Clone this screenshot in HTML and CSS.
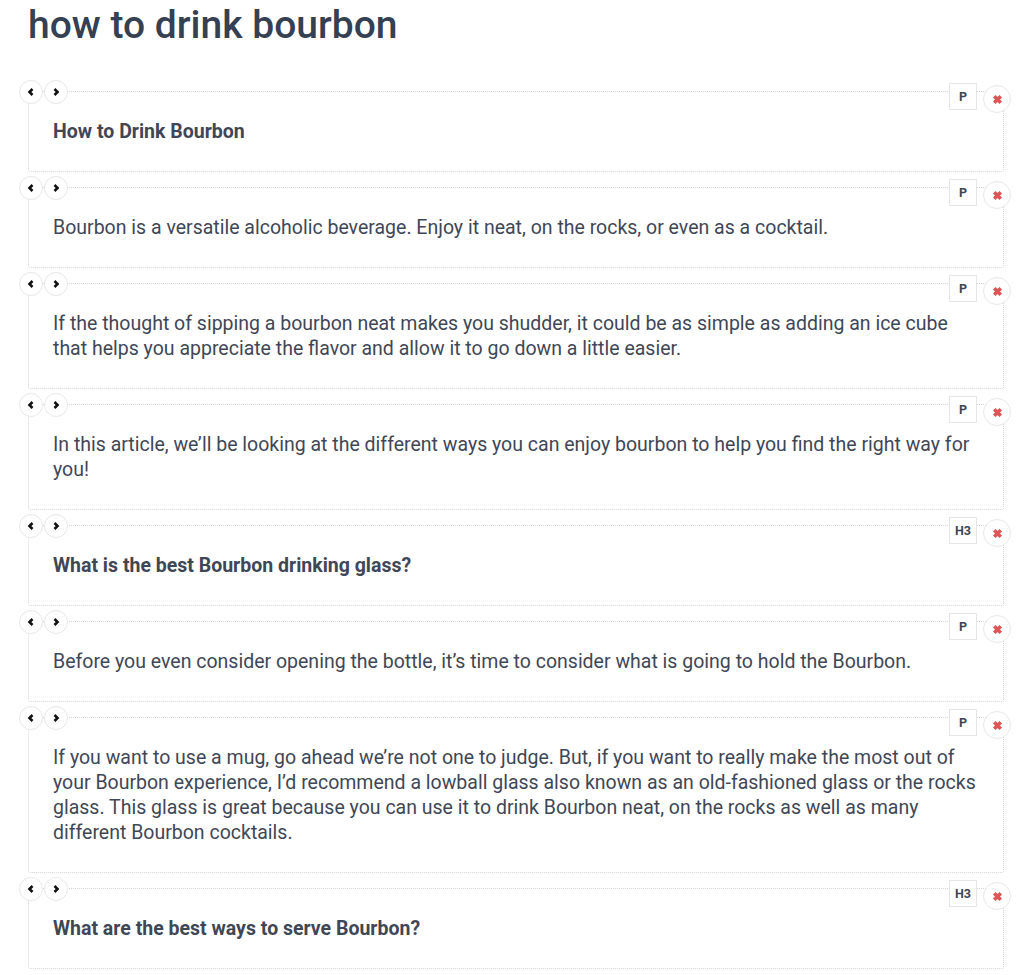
FILE: index.html
```html
<!DOCTYPE html>
<html lang="en">
<head>
    <meta charset="UTF-8">
    <meta name="viewport" content="width=device-width, initial-scale=1.0">
    <title>how to drink bourbon</title>
    <link rel="stylesheet" href="styles.css">
</head>
<body>
    <div class="page">
        <h1 class="page-title">how to drink bourbon</h1>

        <div class="blocks">
            <div class="block">
                <div class="block-move">
                    <button class="move-btn"><svg viewBox="0 0 10 10"><path d="M6.5 2 3.5 5l3 3"/></svg></button>
                    <button class="move-btn"><svg viewBox="0 0 10 10"><path d="M3.5 2l3 3-3 3"/></svg></button>
                </div>
                <span class="block-tag">P</span>
                <button class="block-remove"><svg viewBox="0 0 10 10"><path d="M2.5 2.5l5 5M7.5 2.5l-5 5"/></svg></button>
                <p class="block-text bold">How to Drink Bourbon</p>
            </div>

            <div class="block">
                <div class="block-move">
                    <button class="move-btn"><svg viewBox="0 0 10 10"><path d="M6.5 2 3.5 5l3 3"/></svg></button>
                    <button class="move-btn"><svg viewBox="0 0 10 10"><path d="M3.5 2l3 3-3 3"/></svg></button>
                </div>
                <span class="block-tag">P</span>
                <button class="block-remove"><svg viewBox="0 0 10 10"><path d="M2.5 2.5l5 5M7.5 2.5l-5 5"/></svg></button>
                <p class="block-text">Bourbon is a versatile alcoholic beverage. Enjoy it neat, on the rocks, or even as a cocktail.</p>
            </div>

            <div class="block">
                <div class="block-move">
                    <button class="move-btn"><svg viewBox="0 0 10 10"><path d="M6.5 2 3.5 5l3 3"/></svg></button>
                    <button class="move-btn"><svg viewBox="0 0 10 10"><path d="M3.5 2l3 3-3 3"/></svg></button>
                </div>
                <span class="block-tag">P</span>
                <button class="block-remove"><svg viewBox="0 0 10 10"><path d="M2.5 2.5l5 5M7.5 2.5l-5 5"/></svg></button>
                <p class="block-text">If the thought of sipping a bourbon neat makes you shudder, it could be as simple as adding an ice cube that helps you appreciate the flavor and allow it to go down a little easier.</p>
            </div>

            <div class="block">
                <div class="block-move">
                    <button class="move-btn"><svg viewBox="0 0 10 10"><path d="M6.5 2 3.5 5l3 3"/></svg></button>
                    <button class="move-btn"><svg viewBox="0 0 10 10"><path d="M3.5 2l3 3-3 3"/></svg></button>
                </div>
                <span class="block-tag">P</span>
                <button class="block-remove"><svg viewBox="0 0 10 10"><path d="M2.5 2.5l5 5M7.5 2.5l-5 5"/></svg></button>
                <p class="block-text">In this article, we’ll be looking at the different ways you can enjoy bourbon to help you find the right way for you!</p>
            </div>

            <div class="block">
                <div class="block-move">
                    <button class="move-btn"><svg viewBox="0 0 10 10"><path d="M6.5 2 3.5 5l3 3"/></svg></button>
                    <button class="move-btn"><svg viewBox="0 0 10 10"><path d="M3.5 2l3 3-3 3"/></svg></button>
                </div>
                <span class="block-tag">H3</span>
                <button class="block-remove"><svg viewBox="0 0 10 10"><path d="M2.5 2.5l5 5M7.5 2.5l-5 5"/></svg></button>
                <p class="block-text bold">What is the best Bourbon drinking glass?</p>
            </div>

            <div class="block">
                <div class="block-move">
                    <button class="move-btn"><svg viewBox="0 0 10 10"><path d="M6.5 2 3.5 5l3 3"/></svg></button>
                    <button class="move-btn"><svg viewBox="0 0 10 10"><path d="M3.5 2l3 3-3 3"/></svg></button>
                </div>
                <span class="block-tag">P</span>
                <button class="block-remove"><svg viewBox="0 0 10 10"><path d="M2.5 2.5l5 5M7.5 2.5l-5 5"/></svg></button>
                <p class="block-text">Before you even consider opening the bottle, it’s time to consider what is going to hold the Bourbon.</p>
            </div>

            <div class="block">
                <div class="block-move">
                    <button class="move-btn"><svg viewBox="0 0 10 10"><path d="M6.5 2 3.5 5l3 3"/></svg></button>
                    <button class="move-btn"><svg viewBox="0 0 10 10"><path d="M3.5 2l3 3-3 3"/></svg></button>
                </div>
                <span class="block-tag">P</span>
                <button class="block-remove"><svg viewBox="0 0 10 10"><path d="M2.5 2.5l5 5M7.5 2.5l-5 5"/></svg></button>
                <p class="block-text">If you want to use a mug, go ahead we’re not one to judge. But, if you want to really make the most out of your Bourbon experience, I’d recommend a lowball glass also known as an old-fashioned glass or the rocks glass. This glass is great because you can use it to drink Bourbon neat, on the rocks as well as many different Bourbon cocktails.</p>
            </div>

            <div class="block">
                <div class="block-move">
                    <button class="move-btn"><svg viewBox="0 0 10 10"><path d="M6.5 2 3.5 5l3 3"/></svg></button>
                    <button class="move-btn"><svg viewBox="0 0 10 10"><path d="M3.5 2l3 3-3 3"/></svg></button>
                </div>
                <span class="block-tag">H3</span>
                <button class="block-remove"><svg viewBox="0 0 10 10"><path d="M2.5 2.5l5 5M7.5 2.5l-5 5"/></svg></button>
                <p class="block-text bold">What are the best ways to serve Bourbon?</p>
            </div>
        </div>
    </div>
</body>
</html>
```

FILE: styles.css
```css
body {
    font-family: Roboto, "Liberation Sans", Arial, sans-serif;
    background-color: #fff;
    color: #3c4454;
    margin: 0;
}

.page {
    padding: 0 20px 20px 28px;
}

.page-title {
    font-size: 39px;
    font-weight: 500;
    color: #354052;
    line-height: 46px;
    margin: 2px 0 43px;
}

.blocks {
    display: flex;
    flex-direction: column;
    gap: 15px;
}

.block {
    position: relative;
    border: 1px dotted #d2d5da;
    border-radius: 0 0 2px 2px;
    padding: 27px 25px 27px 24px;
}

.block-text {
    margin: 0;
    font-size: 19.5px;
    line-height: 25px;
    color: #3f4757;
}

.block-text.bold {
    font-weight: 700;
}

/* controls sitting on the dotted border */
.block-move {
    position: absolute;
    top: -12px;
    left: -10px;
    display: flex;
    gap: 1px;
}

.move-btn,
.block-remove {
    width: 24px;
    height: 24px;
    padding: 0;
    border: 1px solid #e8e8e8;
    border-radius: 50%;
    background: #fff;
    display: flex;
    align-items: center;
    justify-content: center;
    cursor: pointer;
}

.move-btn svg {
    width: 10px;
    height: 10px;
    fill: none;
    stroke: #111;
    stroke-width: 2.6;
}

.block-tag {
    position: absolute;
    top: -9px;
    right: 26px;
    width: 28px;
    height: 27px;
    border: 1px solid #e6e6e6;
    background: #fff;
    font-size: 12.5px;
    font-weight: 700;
    color: #3d4555;
    display: flex;
    align-items: center;
    justify-content: center;
    box-sizing: border-box;
}

.block-remove {
    position: absolute;
    top: -7px;
    right: -8px;
    width: 28px;
    height: 28px;
}

.block-remove svg {
    width: 13px;
    height: 13px;
    fill: none;
    stroke: #e05656;
    stroke-width: 2.8;
}
```
